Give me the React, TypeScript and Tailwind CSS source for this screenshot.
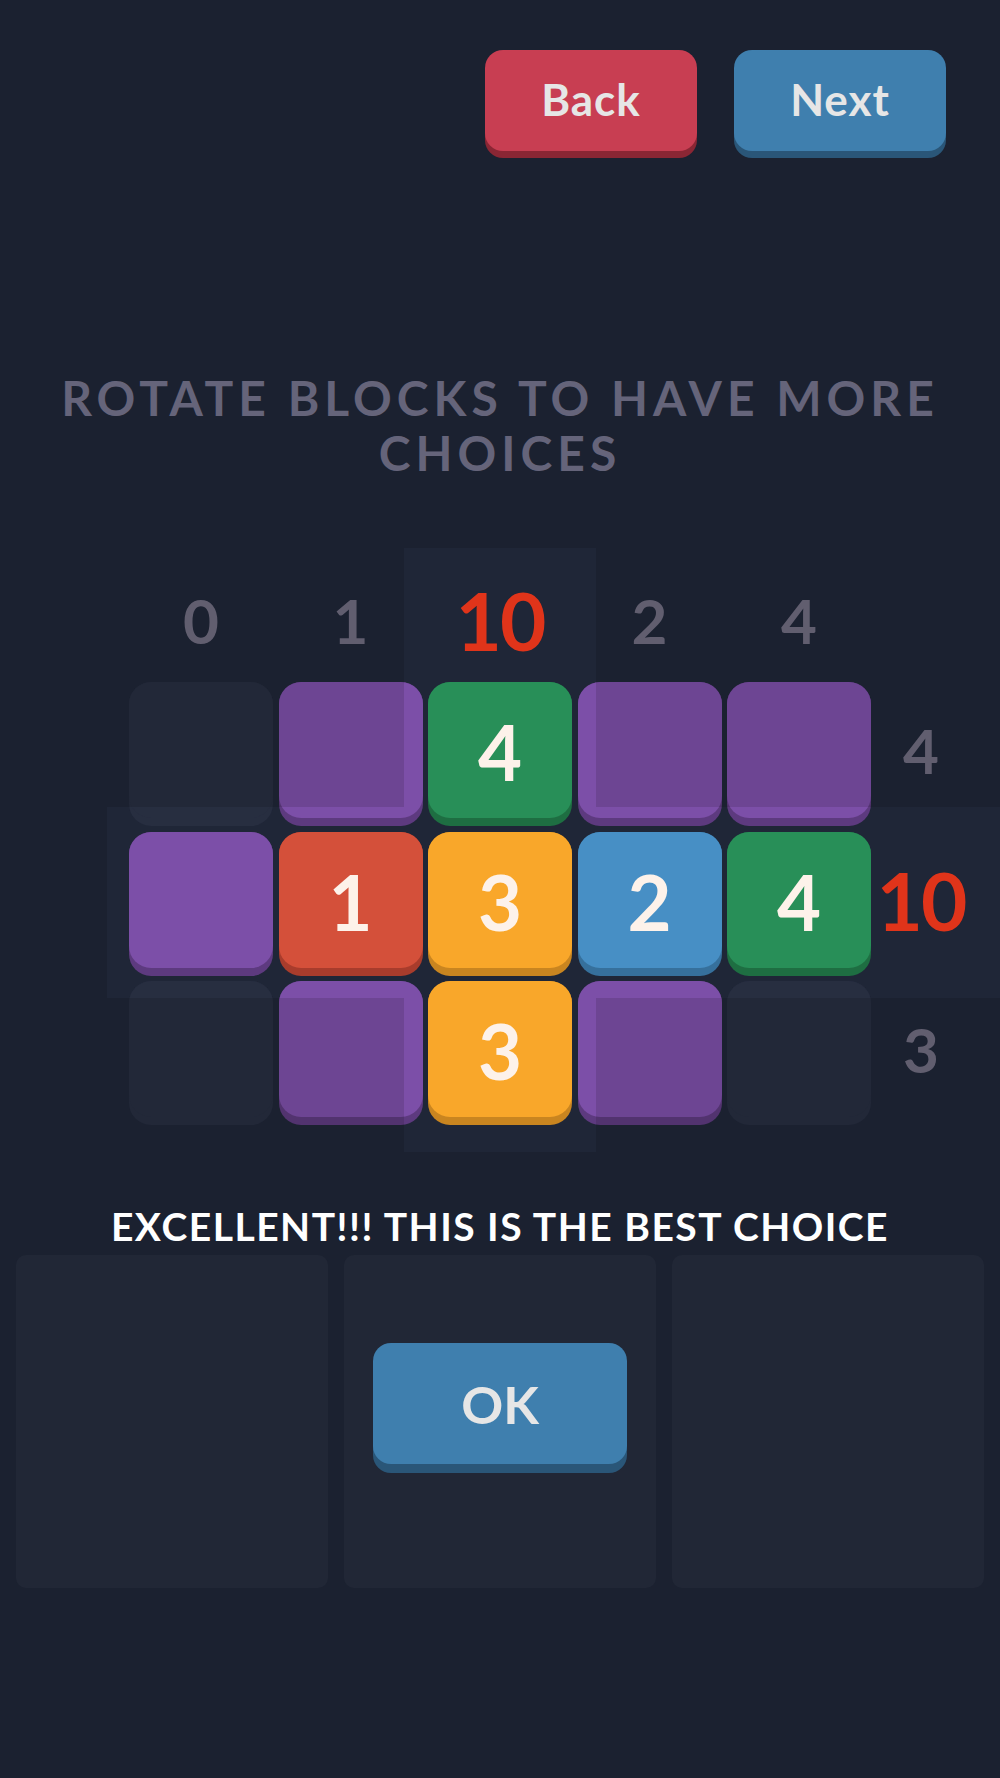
import React from "react";

type Tile = {
  kind: "empty" | "purple" | "green" | "red" | "orange" | "blue";
  value?: number;
};

const board: Tile[][] = [
  [{ kind: "empty" }, { kind: "purple" }, { kind: "green", value: 4 }, { kind: "purple" }, { kind: "purple" }],
  [{ kind: "purple" }, { kind: "red", value: 1 }, { kind: "orange", value: 3 }, { kind: "blue", value: 2 }, { kind: "green", value: 4 }],
  [{ kind: "empty" }, { kind: "purple" }, { kind: "orange", value: 3 }, { kind: "purple" }, { kind: "empty" }],
];

const colLabels = ["0", "1", "10", "2", "4"];
const rowLabels = ["4", "10", "3"];

// face / edge colours, written out so tailwind picks them up
const tileStyles: Record<Tile["kind"], { edge: string; face: string; z: string }> = {
  empty: { edge: "bg-[#222838]", face: "bg-[#222838]", z: "" },
  purple: { edge: "bg-[#52336f]", face: "bg-[#6d4593]", z: "" },
  green: { edge: "bg-[#1e6e42]", face: "bg-[#288f58]", z: "relative z-20" },
  red: { edge: "bg-[#a83c2c]", face: "bg-[#d4503a]", z: "relative z-20" },
  orange: { edge: "bg-[#c98520]", face: "bg-[#f9a72a]", z: "relative z-20" },
  blue: { edge: "bg-[#36709c]", face: "bg-[#478fc5]", z: "relative z-20" },
};

function Block({ tile }: { tile: Tile }) {
  const s = tileStyles[tile.kind];
  return (
    <div className={`h-[144px] w-[144px] rounded-[22px] ${s.edge} ${s.z}`}>
      <div
        className={`flex h-[136px] w-[144px] items-center justify-center rounded-[22px] ${s.face}`}
      >
        {tile.value !== undefined && (
          <span className="pt-[4px] text-[76px] font-bold leading-none text-[#fdf2ea]">
            {tile.value}
          </span>
        )}
      </div>
    </div>
  );
}

function Label({ text }: { text: string }) {
  const hot = text === "10";
  return (
    <span
      className={
        hot
          ? "text-[80px] font-bold leading-none tracking-[-2px] text-[#e0341a]"
          : "text-[62px] font-bold leading-none text-[#615e6f]"
      }
    >
      {text}
    </span>
  );
}

function ChunkyButton({
  label,
  face,
  edge,
  className,
}: {
  label: string;
  face: string;
  edge: string;
  className: string;
}) {
  return (
    <button className={`rounded-[18px] ${face} ${edge} ${className} font-bold text-[#e6e6e6]`}>
      {label}
    </button>
  );
}

export default function App() {
  return (
    <div
      className="min-h-[1778px] w-full bg-[#1b2130]"
      style={{ fontFamily: "Lato, 'Open Sans', sans-serif" }}
    >
      <div className="flex justify-end gap-[37px] pr-[54px] pt-[50px]">
        <ChunkyButton
          label="Back"
          face="bg-[#c83e52]"
          edge="shadow-[0_7px_0_#8a2634]"
          className="h-[101px] w-[212px] pb-[4px] text-[44px] tracking-[1px]"
        />
        <ChunkyButton
          label="Next"
          face="bg-[#3f7fae]"
          edge="shadow-[0_7px_0_#2a5678]"
          className="h-[101px] w-[212px] pb-[4px] text-[44px] tracking-[1px]"
        />
      </div>

      <h1 className="mt-[219px] px-[20px] text-center text-[48px] font-bold leading-[55px] tracking-[5px] text-[#65647a]">
        ROTATE BLOCKS TO HAVE MORE
        <br />
        CHOICES
      </h1>

      {/* board */}
      <div className="relative mt-[68px] pb-[27px]">
        <div className="grid grid-cols-[repeat(5,144px)_89px] grid-rows-[128.5px_144px_144px_144px] gap-x-[5.5px] gap-y-[5.5px] pl-[129px]">
          {colLabels.map((c, i) => (
            <div key={"c" + i} className="relative z-20 flex items-center justify-center pt-[15px]">
              <Label text={c} />
            </div>
          ))}
          <div />
          {board.map((row, r) => (
            <React.Fragment key={r}>
              {row.map((t, c) => (
                <Block key={c} tile={t} />
              ))}
              <div className="relative z-20 flex items-center justify-center pb-[8px]">
                <Label text={rowLabels[r]} />
              </div>
            </React.Fragment>
          ))}
        </div>
        {/* highlighted column + row */}
        <div className="pointer-events-none absolute inset-0 z-10 backdrop-brightness-[1.14] [clip-path:polygon(404px_0,596px_0,596px_259px,1000px_259px,1000px_450px,596px_450px,596px_604px,404px_604px,404px_450px,107px_450px,107px_259px,404px_259px)]" />
      </div>

      <p className="mt-[50px] text-center text-[39px] font-bold leading-[48px] tracking-[1.5px] text-white">
        EXCELLENT!!! THIS IS THE BEST CHOICE
      </p>

      <div className="mt-[5px] grid grid-cols-3 gap-[16px] px-[16px]">
        <div className="h-[333px] rounded-[10px] bg-[#212736]" />
        <div className="flex h-[333px] justify-center rounded-[10px] bg-[#212736] pt-[88px]">
          <ChunkyButton
            label="OK"
            face="bg-[#3f7fae]"
            edge="shadow-[0_9px_0_#2a5678]"
            className="h-[121px] w-[254px] text-[52px]"
          />
        </div>
        <div className="h-[333px] rounded-[10px] bg-[#212736]" />
      </div>
    </div>
  );
}
